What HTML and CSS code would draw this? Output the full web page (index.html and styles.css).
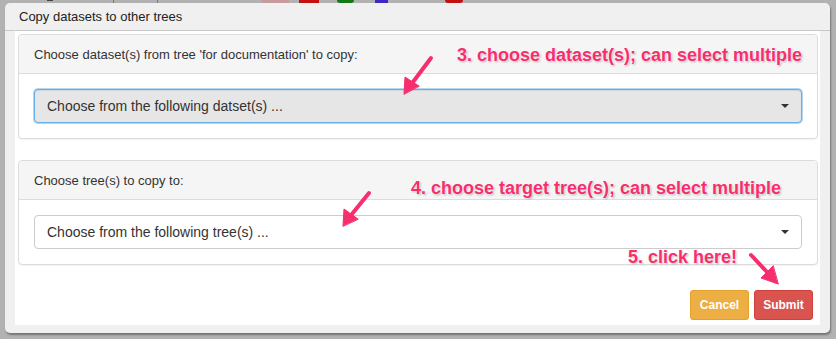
FILE: index.html
```html
<!DOCTYPE html>
<html>
<head>
<meta charset="utf-8">
<link rel="stylesheet" href="styles.css">
</head>
<body>
<div class="backdrop">
  <span class="bd bd-mark"></span>
  <span class="bd bd-line1"></span>
  <span class="bd bd-line2"></span>
  <span class="bd bd-pink"></span>
  <span class="bd bd-red"></span>
  <span class="bd bd-green"></span>
  <span class="bd bd-blue"></span>
  <span class="bd bd-red2"></span>
</div>
<div class="dialog">
  <div class="dialog-title">Copy datasets to other trees</div>
  <div class="dialog-body">
    <div class="panel">
      <div class="panel-heading">Choose dataset(s) from tree 'for documentation' to copy:</div>
      <div class="panel-content">
        <div class="select select-focus"><span>Choose from the following datset(s) ...</span><span class="caret"></span></div>
      </div>
    </div>
    <div class="panel">
      <div class="panel-heading">Choose tree(s) to copy to:</div>
      <div class="panel-content">
        <div class="select"><span>Choose from the following tree(s) ...</span><span class="caret"></span></div>
      </div>
    </div>
    <div class="footer">
      <button class="btn btn-cancel">Cancel</button>
      <button class="btn btn-submit">Submit</button>
    </div>
  </div>
</div>
<div class="note note-3">3. choose dataset(s); can select multiple</div>
<div class="note note-4">4. choose target tree(s); can select multiple</div>
<div class="note note-5">5. click here!</div>
<svg class="arrows" width="836" height="339" viewBox="0 0 836 339">
  <g stroke="#f72e6e" stroke-width="4" stroke-linecap="round" fill="#f72e6e">
    <line x1="431" y1="58" x2="413" y2="82"/>
    <polygon points="404,94 405,77 419,86" stroke-width="1"/>
    <line x1="369" y1="193" x2="352" y2="214"/>
    <polygon points="343,226 344,209 358,219" stroke-width="1"/>
    <line x1="751" y1="255" x2="767" y2="272"/>
    <polygon points="778,284 761,278 773,266" stroke-width="1"/>
  </g>
</svg>
</body>
</html>
```
FILE: styles.css
```css
html, body {
  margin: 0;
  padding: 0;
}
body {
  width: 836px;
  height: 339px;
  overflow: hidden;
  background: #b2b2b2;
  font-family: "Liberation Sans", Arial, sans-serif;
  color: #333;
  position: relative;
}
.backdrop {
  position: absolute;
  left: 0;
  top: 0;
  width: 836px;
  height: 4px;
}
.bd {
  position: absolute;
  top: 0;
  display: block;
}
.bd-mark { left: 47px; width: 6px; height: 1px; background: #444; }
.bd-line1 { left: 113px; width: 1px; height: 3px; background: #777; }
.bd-line2 { left: 157px; width: 1px; height: 3px; background: #777; }
.bd-pink { left: 262px; width: 27px; height: 3px; background: #c79aa0; }
.bd-red { left: 299px; width: 20px; height: 3px; background: #c4100f; }
.bd-green { left: 337px; width: 17px; height: 3px; background: #137a13; border-radius: 0 0 8px 8px; }
.bd-blue { left: 375px; width: 13px; height: 3px; background: #3b2bc4; }
.bd-red2 { left: 445px; width: 18px; height: 3px; background: #c4100f; border-radius: 0 0 9px 9px; }

.dialog {
  position: relative;
  margin: 3px 0 0 5px;
  width: 825px;
  height: 330px;
  background: #f0f0f0;
  border-radius: 5px;
  box-shadow: 1px 2px 2px rgba(0, 0, 0, 0.35);
  display: flex;
  flex-direction: column;
  box-sizing: border-box;
  padding: 0 10px 8px 10px;
}
.dialog-title {
  height: 27px;
  line-height: 28px;
  font-size: 13px;
  color: #222;
  border-bottom: 1px solid #c8c8c8;
  margin: 0 -10px 0 -10px;
  padding-left: 14px;
}
.dialog-body {
  flex: 1;
  background: #fff;
  padding: 3px 2px 0 3px;
  display: flex;
  flex-direction: column;
}
.panel {
  border: 1px solid #dcdcdc;
  border-radius: 4px;
  background: #fff;
  margin-bottom: 21px;
  box-shadow: 0 1px 1px rgba(0, 0, 0, 0.05);
}
.panel-heading {
  background: #f5f5f5;
  border-bottom: 1px solid #dcdcdc;
  border-radius: 4px 4px 0 0;
  height: 38px;
  line-height: 40px;
  padding-left: 15px;
  font-size: 13px;
  color: #333;
}
.panel-content {
  padding: 15px;
}
.select {
  height: 32px;
  border: 1px solid #ccc;
  border-radius: 4px;
  display: flex;
  align-items: center;
  justify-content: space-between;
  padding: 0 12px;
  font-size: 14px;
  color: #333;
  background: #fff;
}
.select-focus {
  background: #e6e6e6;
  border-color: #66afe9;
  box-shadow: 0 0 0 1px rgba(102, 175, 233, 0.5), inset 0 1px 1px rgba(0, 0, 0, 0.075);
}
.caret {
  width: 0;
  height: 0;
  border-left: 4px solid transparent;
  border-right: 4px solid transparent;
  border-top: 4px solid #333;
}
.footer {
  display: flex;
  justify-content: flex-end;
  gap: 5px;
  padding-top: 4px;
  padding-right: 5px;
}
.btn {
  height: 30px;
  width: 59px;
  border-radius: 3px;
  font-family: "Liberation Sans", Arial, sans-serif;
  font-size: 12px;
  font-weight: bold;
  color: #fff;
  padding: 0;
}
.btn-cancel {
  background: #edae44;
  border: 1px solid #e3a02f;
}
.btn-submit {
  background: #d9534f;
  border: 1px solid #d0413c;
}
.note {
  position: absolute;
  font-size: 18px;
  line-height: 21px;
  font-weight: bold;
  color: #f72e6e;
  white-space: nowrap;
  text-shadow: 0 0 2px #fff, 0 0 2px #fff, 1px 1px 2px rgba(0, 0, 0, 0.35);
}
.note-3 { left: 457px; top: 45px; }
.note-4 { left: 411px; top: 178px; }
.note-5 { left: 628px; top: 247px; }
.arrows {
  position: absolute;
  left: 0;
  top: 0;
}
```
